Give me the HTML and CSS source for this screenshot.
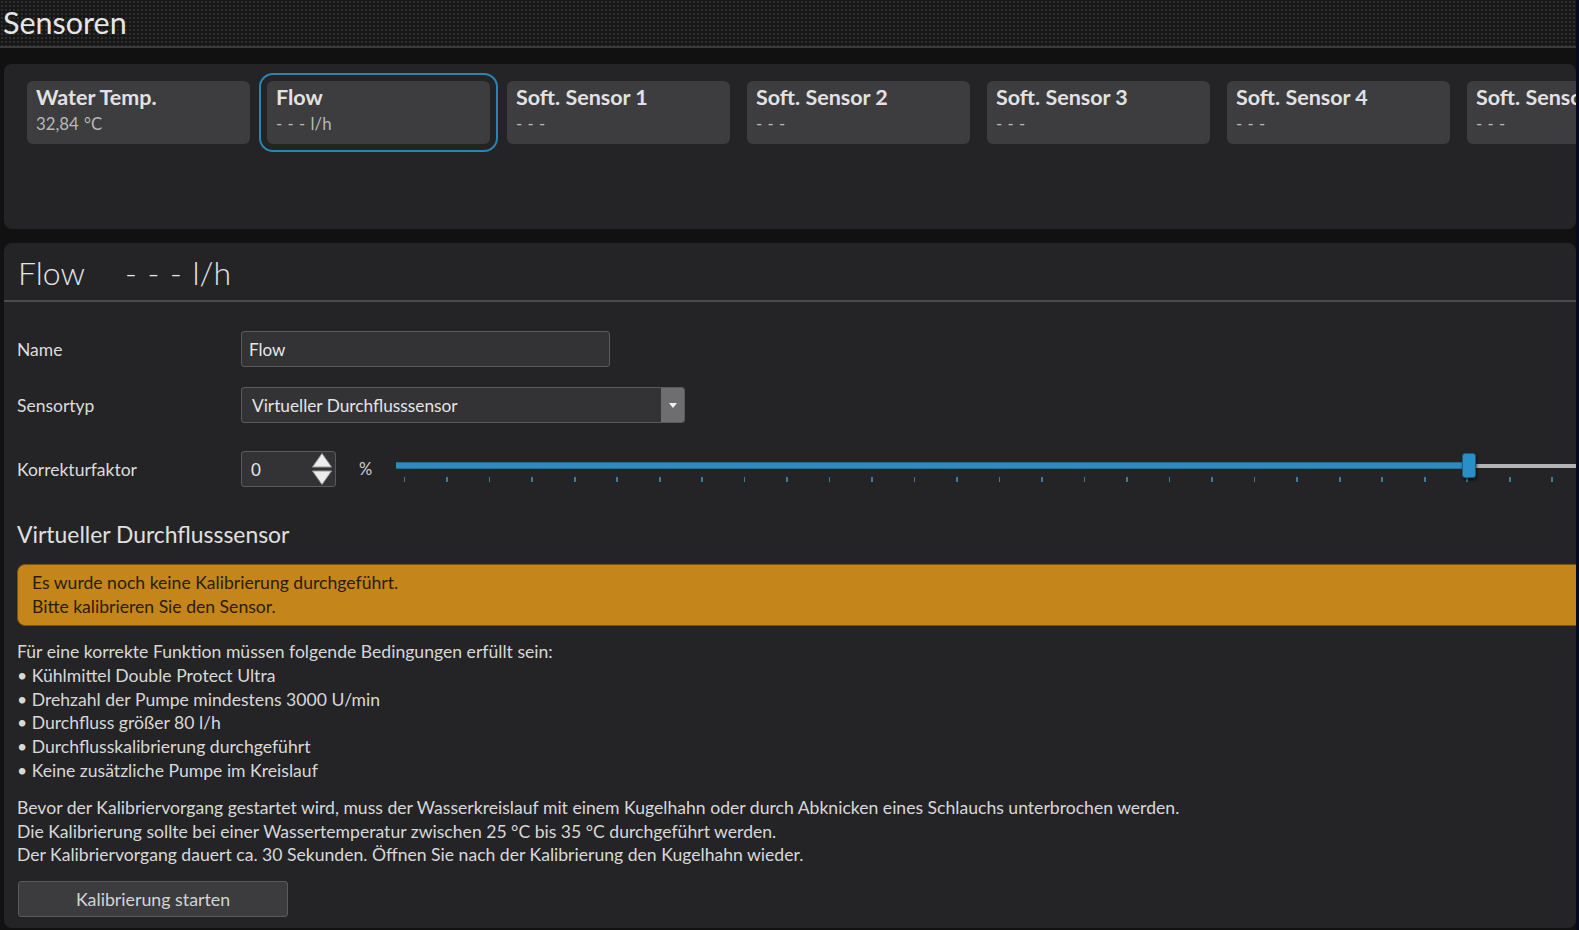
FILE: index.html
```html
<!DOCTYPE html>
<html lang="de">
<head>
<meta charset="utf-8">
<title>Sensoren</title>
<link rel="stylesheet" href="styles.css">
</head>
<body>
<div class="app">
  <header class="topbar"><h1 class="topbar-title">Sensoren</h1></header>

  <section class="panel sensors">
    <div class="card-row">
      <div class="card"><div class="card-title">Water Temp.</div><div class="card-value">32,84 °C</div></div>
      <div class="card selected"><div class="card-title">Flow</div><div class="card-value">- - - l/h</div></div>
      <div class="card"><div class="card-title">Soft. Sensor 1</div><div class="card-value">- - -</div></div>
      <div class="card"><div class="card-title">Soft. Sensor 2</div><div class="card-value">- - -</div></div>
      <div class="card"><div class="card-title">Soft. Sensor 3</div><div class="card-value">- - -</div></div>
      <div class="card"><div class="card-title">Soft. Sensor 4</div><div class="card-value">- - -</div></div>
      <div class="card"><div class="card-title">Soft. Sensor 5</div><div class="card-value">- - -</div></div>
    </div>
  </section>

  <section class="panel detail">
    <div class="detail-head">
      <span class="dh-name">Flow</span>
      <span class="dh-value">- - - l/h</span>
    </div>

    <div class="detail-body">
      <div class="form-row row-name">
        <label class="form-label">Name</label>
        <div class="text-input">Flow</div>
      </div>
      <div class="form-row row-type">
        <label class="form-label">Sensortyp</label>
        <div class="select">
          <span class="select-text">Virtueller Durchflusssensor</span>
          <span class="select-btn"><svg width="8" height="5" viewBox="0 0 8 5"><path d="M0 0h8L4 5z" fill="#f2f2f2"/></svg></span>
        </div>
      </div>
      <div class="form-row row-factor">
        <label class="form-label">Korrekturfaktor</label>
        <div class="spin">
          <span class="spin-text">0</span>
          <span class="spin-arrows">
            <svg width="22" height="34" viewBox="0 0 22 34">
              <path d="M11 1.5L20.5 15H1.5z" fill="#ececec" stroke="#9a9a9a" stroke-width="1"/>
              <path d="M11 32.5L20.5 19H1.5z" fill="#ececec" stroke="#9a9a9a" stroke-width="1"/>
            </svg>
          </span>
        </div>
        <span class="unit">%</span>
        <div class="slider">
          <div class="slider-track">
            <div class="slider-fill"></div>
            <div class="slider-rest"></div>
          </div>
          <div class="slider-ticks"></div>
          <div class="slider-thumb"></div>
        </div>
      </div>

      <h2 class="section-title">Virtueller Durchflusssensor</h2>

      <div class="warning">
        <div>Es wurde noch keine Kalibrierung durchgeführt.</div>
        <div>Bitte kalibrieren Sie den Sensor.</div>
      </div>

      <div class="text-block conditions">
        <div>Für eine korrekte Funktion müssen folgende Bedingungen erfüllt sein:</div>
        <div>• Kühlmittel Double Protect Ultra</div>
        <div>• Drehzahl der Pumpe mindestens 3000 U/min</div>
        <div>• Durchfluss größer 80 l/h</div>
        <div>• Durchflusskalibrierung durchgeführt</div>
        <div>• Keine zusätzliche Pumpe im Kreislauf</div>
      </div>

      <div class="text-block notes">
        <div>Bevor der Kalibriervorgang gestartet wird, muss der Wasserkreislauf mit einem Kugelhahn oder durch Abknicken eines Schlauchs unterbrochen werden.</div>
        <div>Die Kalibrierung sollte bei einer Wassertemperatur zwischen 25 °C bis 35 °C durchgeführt werden.</div>
        <div>Der Kalibriervorgang dauert ca. 30 Sekunden. Öffnen Sie nach der Kalibrierung den Kugelhahn wieder.</div>
      </div>

      <button class="btn">Kalibrierung starten</button>
    </div>
  </section>
</div>
</body>
</html>
```
FILE: styles.css
```css
* { box-sizing: border-box; }
html, body { margin: 0; padding: 0; }
body {
  background: #060a1a;
  font-family: "Lato", "Liberation Sans", sans-serif;
  color: #dcdcdc;
  width: 1579px;
  height: 930px;
  overflow: hidden;
}
.app {
  width: 1576px;
  height: 930px;
  background: #111111;
  display: flex;
  flex-direction: column;
  overflow: hidden;
}
.topbar {
  height: 48px;
  flex: none;
  background-color: #171717;
  background-image: radial-gradient(circle, #2e2e2e 0.9px, transparent 1.1px);
  background-size: 4px 4px;
  border-bottom: 2px solid #3a3a3a;
  display: flex;
  align-items: center;
}
.topbar-title {
  margin: 0 0 2px 3px;
  font-size: 30.5px;
  font-weight: 400;
  color: #e6e6e6;
  line-height: 1;
}
.panel {
  background: #242426;
  border-radius: 8px;
  margin-left: 4px;
  overflow: hidden;
}
.sensors {
  margin-top: 16px;
  height: 165px;
  flex: none;
  padding: 17px 0 0 23px;
}
.card-row {
  display: flex;
  gap: 17px;
}
.card {
  flex: none;
  width: 223px;
  height: 63px;
  background: #3d3d3f;
  border-radius: 6px;
  padding: 3px 9px 0;
}
.card.selected {
  outline: 2px solid #2a86b0;
  outline-offset: 6px;
}
.card-title {
  font-size: 21.5px;
  font-weight: 700;
  color: #e2e2e2;
  line-height: 27px;
  white-space: nowrap;
}
.card-value {
  font-size: 16.8px;
  color: #b8b8b8;
  line-height: 25px;
  word-spacing: 1px;
}
.detail {
  margin-top: 14px;
  height: 685px;
  flex: none;
}
.detail-head {
  height: 59px;
  border-bottom: 2px solid #4c4c4e;
  display: flex;
  align-items: center;
  padding: 2px 0 0 14px;
  font-size: 32px;
  font-weight: 300;
  color: #e4e4e4;
}
.dh-value {
  margin-left: 40px;
  word-spacing: 2px;
}
.detail-body {
  padding: 29px 0 0 13px;
}
.form-row {
  display: flex;
  align-items: center;
}
.form-label {
  width: 224px;
  flex: none;
  font-size: 17.5px;
  color: #dcdcdc;
}
.text-input {
  flex: none;
  width: 369px;
  height: 36px;
  background: #333335;
  border: 1px solid #5a5a5c;
  border-radius: 3px;
  padding-left: 7px;
  display: flex;
  align-items: center;
  font-size: 17px;
  color: #e8e8e8;
}
.row-type { margin-top: 20px; }
.select {
  flex: none;
  width: 444px;
  height: 36px;
  background: #333335;
  border: 1px solid #5a5a5c;
  border-radius: 3px;
  display: flex;
  align-items: stretch;
  overflow: hidden;
}
.select-text {
  flex: 1;
  display: flex;
  align-items: center;
  padding-left: 10px;
  font-size: 17.3px;
  color: #e4e4e4;
}
.select-btn {
  width: 23px;
  background: #6e6e70;
  display: flex;
  align-items: center;
  justify-content: center;
}
.row-factor { margin-top: 28px; }
.spin {
  flex: none;
  width: 95px;
  height: 36px;
  background: #333335;
  border: 1px solid #5a5a5c;
  border-radius: 3px;
  display: flex;
  align-items: center;
  padding: 0 2px 0 9px;
}
.spin-text {
  flex: 1;
  font-size: 17px;
  color: #e8e8e8;
}
.spin-arrows {
  display: flex;
  align-items: center;
}
.unit {
  margin-left: 23px;
  width: 37px;
  flex: none;
  font-size: 16.5px;
  color: #cfcfcf;
}
.slider {
  position: relative;
  flex: none;
  width: 1200px;
  height: 36px;
}
.slider-track {
  position: absolute;
  left: 0;
  right: 0;
  top: 11px;
  height: 7px;
  display: flex;
  align-items: center;
}
.slider-fill {
  width: 1070px;
  height: 7px;
  background: #2b8cbd;
  border-top: 1px solid #1f6d94;
  border-bottom: 1px solid #1f6d94;
}
.slider-rest {
  flex: 1;
  height: 4px;
  background: #b4b4b4;
}
.slider-ticks {
  position: absolute;
  left: 8px;
  right: 0;
  top: 26px;
  height: 5px;
  background-image: repeating-linear-gradient(to right, #3a7e9f 0, #3a7e9f 1.5px, transparent 1.5px, transparent 42.5px);
}
.slider-thumb {
  position: absolute;
  left: 1066px;
  top: 2px;
  width: 14px;
  height: 25px;
  background: #2a8fc6;
  border: 1px solid #1b5d80;
  border-radius: 3px;
  box-shadow: 1px 2px 3px rgba(0,0,0,0.6);
}
.section-title {
  margin: 33px 0 0;
  font-size: 22.9px;
  font-weight: 400;
  color: #e0e0e0;
  line-height: 28px;
}
.warning {
  margin: 16px -20px 0 0;
  background: #c4861a;
  border: 1px solid #7a5410;
  border-radius: 8px;
  padding: 6px 14px;
  font-size: 17.6px;
  line-height: 24px;
  color: #2a1d05;
}
.text-block {
  font-size: 17.6px;
  line-height: 23.8px;
  color: #d8d8d8;
}
.conditions { margin-top: 14px; }
.notes { margin-top: 13px; }
.btn {
  display: block;
  margin: 14px 0 0 1px;
  width: 270px;
  height: 36px;
  background: #3c3c3e;
  border: 1px solid #5a5a5c;
  border-radius: 3px;
  font-family: inherit;
  font-size: 17.8px;
  color: #d4d4d4;
  padding: 0;
}
```
